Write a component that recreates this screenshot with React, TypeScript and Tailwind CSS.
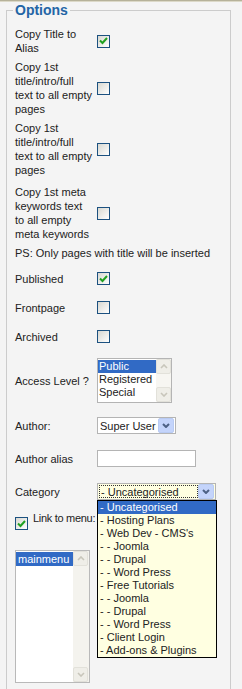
import React from 'react'

function Checkbox({ checked }: { checked?: boolean }) {
  return (
    <span className="flex h-[13px] w-[13px] shrink-0 items-center justify-center border border-[#1c5180] bg-gradient-to-br from-[#d8d8d1] to-white">
      {checked && (
        <svg width="9" height="8" viewBox="0 0 9 8">
          <path d="M1 3.5 L3.5 6 L8 1" stroke="#21a121" strokeWidth="2" fill="none" />
        </svg>
      )}
    </span>
  )
}

function ScrollBtn({ up }: { up?: boolean }) {
  return (
    <div className="flex h-[15px] w-[15px] items-center justify-center rounded-[2px] border border-[#e2e1da] bg-[#efeee8]">
      <svg width="8" height="5" viewBox="0 0 8 5">
        <path
          d={up ? 'M1 4 L4 1 L7 4' : 'M1 1 L4 4 L7 1'}
          stroke="#c8c6bb"
          strokeWidth="1.6"
          fill="none"
        />
      </svg>
    </div>
  )
}

function SelectArrow() {
  return (
    <div className="flex h-[15px] w-[16px] shrink-0 items-center justify-center rounded-[2px] border border-[#b9cbf3] bg-[#c4d4fb]">
      <svg width="8" height="5" viewBox="0 0 8 5">
        <path d="M1 1 L4 4 L7 1" stroke="#4d6185" strokeWidth="2" fill="none" />
      </svg>
    </div>
  )
}

const categories = [
  '- Uncategorised',
  '- Hosting Plans',
  '- Web Dev - CMS\'s',
  '- - Joomla',
  '- - Drupal',
  '- - Word Press',
  '- Free Tutorials',
  '- - Joomla',
  '- - Drupal',
  '- - Word Press',
  '- Client Login',
  '- Add-ons & Plugins',
]

export default function App() {
  return (
    <div className="min-h-[689px] w-[242px] overflow-hidden bg-[#f4f4f4] font-['Liberation_Sans',Arial,sans-serif] text-[11px] leading-[14px] text-[#222]">
      <div className="h-[2px] border-t border-[#b6b29a] bg-[#dcd9c8]" />
      <fieldset className="ml-[6px] w-[225px] border border-[#cccccc] pb-[20px] pl-[6px] pr-0">
        <legend className="px-[2px] text-[14px] font-bold leading-[16px] text-[#2365a6]">Options</legend>
        <div className="flex flex-col pl-[2px]">
          <div className="mt-[9px] flex items-center">
            <div className="w-[82px]">Copy Title to<br />Alias</div>
            <Checkbox checked />
          </div>
          <div className="mt-[5px] flex items-center">
            <div className="w-[82px]">Copy 1st<br />title/intro/full<br />text to all empty<br />pages</div>
            <Checkbox />
          </div>
          <div className="mt-[5px] flex items-center">
            <div className="w-[82px]">Copy 1st<br />title/intro/full<br />text to all empty<br />pages</div>
            <Checkbox />
          </div>
          <div className="mt-[8px] flex items-center">
            <div className="w-[82px]">Copy 1st meta<br />keywords text<br />to all empty<br />meta keywords</div>
            <Checkbox />
          </div>
          <div className="mt-[5px]">PS: Only pages with title will be inserted</div>
          <div className="mt-[4px] flex h-[29px] items-center">
            <div className="w-[82px]">Published</div>
            <Checkbox checked />
          </div>
          <div className="flex h-[29px] items-center">
            <div className="w-[82px]">Frontpage</div>
            <Checkbox />
          </div>
          <div className="flex h-[29px] items-center">
            <div className="w-[82px]">Archived</div>
            <Checkbox />
          </div>
          <div className="mt-[7px] flex h-[45px] items-center">
            <div className="w-[82px]">Access Level ?</div>
            <div className="flex h-[45px] w-[75px] border border-[#b4b4b4] bg-white leading-[13px]">
              <div className="flex-1 pt-[1px]">
                <div className="bg-[#316ac5] px-[1px] text-white">Public</div>
                <div className="px-[1px]">Registered</div>
                <div className="px-[1px]">Special</div>
              </div>
              <div className="flex w-[15px] flex-col justify-between bg-[#f7f6f2]">
                <ScrollBtn up />
                <ScrollBtn />
              </div>
            </div>
          </div>
          <div className="mt-[14px] flex h-[17px] items-center">
            <div className="w-[82px]">Author:</div>
            <div className="flex h-[17px] w-[79px] items-center justify-between border border-[#b4b4b4] bg-white pl-[2px] pr-[1px]">
              <span>Super User</span>
              <SelectArrow />
            </div>
          </div>
          <div className="mt-[16px] flex h-[17px] items-center">
            <div className="w-[82px]">Author alias</div>
            <div className="h-[17px] w-[99px] border border-[#b4b4b4] bg-white" />
          </div>
          <div className="mt-[16px] flex h-[17px] items-center">
            <div className="w-[82px]">Category</div>
            <div className="relative">
              <div className="flex h-[17px] w-[119px] items-center justify-between border border-[#b4b4b4] bg-[#ffffe1] pl-[1px] pr-[1px]">
                <span className="flex h-[13px] w-[99px] items-center border border-dotted border-[#333] pl-[1px]">- Uncategorised</span>
                <SelectArrow />
              </div>
              <div className="absolute left-0 top-[17px] z-10 w-[120px] border border-black bg-[#ffffe1] leading-[13px]">
                {categories.map((c, i) => (
                  <div key={i} className={i === 0 ? 'bg-[#316ac5] px-[2px] text-white' : 'px-[2px]'}>
                    {c}
                  </div>
                ))}
              </div>
            </div>
          </div>
          <div className="mt-[11px] flex items-start">
            <span className="mt-[6px]">
              <Checkbox checked />
            </span>
            <span className="ml-[5px] tracking-[-0.3px]">Link to menu:</span>
          </div>
          <div className="mt-[20px] flex h-[133px] w-[75px] border border-[#b9b9b9] bg-white">
            <div className="flex-1 pt-[1px] leading-[14px]">
              <div className="bg-[#316ac5] px-[2px] text-white">mainmenu</div>
            </div>
            <div className="flex w-[16px] flex-col justify-between bg-[#f4f3ee]">
              <ScrollBtn up />
              <ScrollBtn />
            </div>
          </div>
        </div>
      </fieldset>
    </div>
  )
}
